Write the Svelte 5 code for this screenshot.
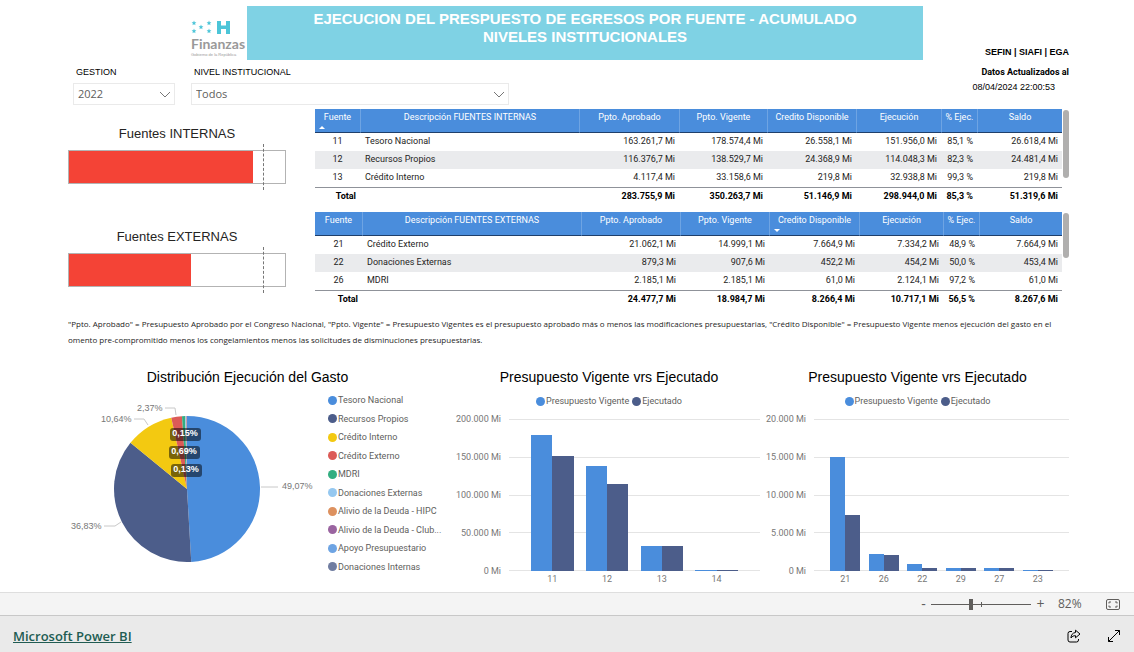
<script>
  let gestion = $state('2022');
  let nivel = $state('Todos');
  let zoom = $state(40);

  const gauges = [
    { label: 'Fuentes INTERNAS', value: 85.3 },
    { label: 'Fuentes EXTERNAS', value: 56.5 },
  ];

  const tables = [
    {
      columns: [
        { name: 'Fuente', width: 45, sort: 'asc' },
        { name: 'Descripción FUENTES INTERNAS', width: 219 },
        { name: 'Ppto. Aprobado', width: 100 },
        { name: 'Ppto. Vigente', width: 88 },
        { name: 'Credito Disponible', width: 89 },
        { name: 'Ejecución', width: 85 },
        { name: '% Ejec.', width: 36 },
        { name: 'Saldo', width: 85 },
      ],
      rows: [
        ['11', 'Tesoro Nacional', '163.261,7 Mi', '178.574,4 Mi', '26.558,1 Mi', '151.956,0 Mi', '85,1 %', '26.618,4 Mi'],
        ['12', 'Recursos Propios', '116.376,7 Mi', '138.529,7 Mi', '24.368,9 Mi', '114.048,3 Mi', '82,3 %', '24.481,4 Mi'],
        ['13', 'Crédito Interno', '4.117,4 Mi', '33.158,6 Mi', '219,8 Mi', '32.938,8 Mi', '99,3 %', '219,8 Mi'],
      ],
      total: ['Total', '', '283.755,9 Mi', '350.263,7 Mi', '51.146,9 Mi', '298.944,0 Mi', '85,3 %', '51.319,6 Mi'],
      scroll: 72,
    },
    {
      columns: [
        { name: 'Fuente', width: 47 },
        { name: 'Descripción FUENTES EXTERNAS', width: 219 },
        { name: 'Ppto. Aprobado', width: 99 },
        { name: 'Ppto. Vigente', width: 89 },
        { name: 'Credito Disponible', width: 90, sort: 'desc' },
        { name: 'Ejecución', width: 84 },
        { name: '% Ejec.', width: 36 },
        { name: 'Saldo', width: 83 },
      ],
      rows: [
        ['21', 'Crédito Externo', '21.062,1 Mi', '14.999,1 Mi', '7.664,9 Mi', '7.334,2 Mi', '48,9 %', '7.664,9 Mi'],
        ['22', 'Donaciones Externas', '879,3 Mi', '907,6 Mi', '452,2 Mi', '454,2 Mi', '50,0 %', '453,4 Mi'],
        ['26', 'MDRI', '2.185,1 Mi', '2.185,1 Mi', '61,0 Mi', '2.124,1 Mi', '97,2 %', '61,0 Mi'],
      ],
      total: ['Total', '', '24.477,7 Mi', '18.984,7 Mi', '8.266,4 Mi', '10.717,1 Mi', '56,5 %', '8.267,6 Mi'],
      scroll: 47,
    },
  ];

  const sources = [
    { name: 'Tesoro Nacional', share: 49.07, color: '#4a8ddc' },
    { name: 'Recursos Propios', share: 36.83, color: '#4c5d8a' },
    { name: 'Crédito Interno', share: 10.64, color: '#f3c911' },
    { name: 'Crédito Externo', share: 2.37, color: '#dc5b57' },
    { name: 'MDRI', share: 0.69, color: '#33ae81' },
    { name: 'Donaciones Externas', share: 0.15, color: '#95c8f0' },
    { name: 'Alivio de la Deuda - HIPC', share: 0.13, color: '#dd915f' },
    { name: 'Alivio de la Deuda - Club...', share: 0.08, color: '#9a64a0' },
    { name: 'Apoyo Presupuestario', share: 0.03, color: '#6ea4e3' },
    { name: 'Donaciones Internas', share: 0.01, color: '#707da1' },
  ];

  const point = (share, r) => {
    const a = (share / 100) * Math.PI * 2;
    return `${119 + r * Math.sin(a)} ${94 - r * Math.cos(a)}`;
  };

  let start = 0;
  const slices = sources.map((s) => {
    const end = start + s.share;
    const d = `M119 94 L${point(start, 73)} A73 73 0 0 1 ${point(end, 73)} Z`;
    start = end;
    return { d, color: s.color };
  });

  const pieLabels = [
    { text: '49,07%', x: 214, y: 94, line: '193,92 210,92' },
    { text: '36,83%', x: 3, y: 134, line: '36,131 47,131 53,127' },
    { text: '10,64%', x: 33, y: 27, line: '66,24 76,24 80,30' },
    { text: '2,37%', x: 69, y: 16, line: '97,13 107,13 108,20' },
  ];

  const pieBadges = [
    { text: '0,15%', x: 102, y: 33 },
    { text: '0,69%', x: 101, y: 51 },
    { text: '0,13%', x: 103, y: 69 },
  ];

  const barCharts = [
    {
      id: 'internas',
      max: 200000,
      ticks: ['200.000 Mi', '150.000 Mi', '100.000 Mi', '50.000 Mi', '0 Mi'],
      bars: [
        ['11', 178574, 151956],
        ['12', 138529, 114048],
        ['13', 33158, 32938],
        ['14', 1500, 1400],
      ],
    },
    {
      id: 'externas',
      max: 20000,
      ticks: ['20.000 Mi', '15.000 Mi', '10.000 Mi', '5.000 Mi', '0 Mi'],
      bars: [
        ['21', 14999, 7334],
        ['26', 2185, 2124],
        ['22', 907, 454],
        ['29', 440, 430],
        ['27', 400, 350],
        ['23', 140, 130],
      ],
    },
  ];
</script>

{#snippet chevron()}
  <svg class="chevron" viewBox="0 0 12 7" aria-hidden="true"><path d="M1 1l5 5 5-5" /></svg>
{/snippet}

<div class="page">
  <main class="report">
    <header class="header">
      <div class="logo">
        <svg class="logo-mark" viewBox="0 0 40 15" aria-hidden="true">
          {#each [[3, 3], [3, 11], [10, 7], [18, 3], [18, 11]] as [x, y]}
            <path transform="translate({x} {y})" d="M0-2.4l.7 1.6 1.7.1-1.3 1.1.4 1.8L0 1.2l-1.5 1 .4-1.8L-2.4-.7l1.7-.1z" />
          {/each}
          <path d="M26 1h4v4.500h5V1h4v13h-4V9h-5v5h-4z" />
        </svg>
        <span class="logo-name">Finanzas</span>
        <span class="logo-sub">Gobierno de la República</span>
      </div>
      <h1 class="banner">
        EJECUCION DEL PRESPUESTO DE EGRESOS POR FUENTE - ACUMULADO<br />NIVELES INSTITUCIONALES
      </h1>
      <div class="meta">
        <strong class="meta-source">SEFIN | SIAFI | EGA</strong>
        <strong class="meta-title">Datos Actualizados al</strong>
        <span class="meta-date">08/04/2024 22:00:53</span>
      </div>
      <div class="filters">
        <div class="filter">
          <label for="gestion">GESTION</label>
          <div class="select">
            <select id="gestion" bind:value={gestion}>
              <option>2022</option>
            </select>
            {@render chevron()}
          </div>
        </div>
        <div class="filter filter-wide">
          <label for="nivel">NIVEL INSTITUCIONAL</label>
          <div class="select">
            <select id="nivel" bind:value={nivel}>
              <option>Todos</option>
            </select>
            {@render chevron()}
          </div>
        </div>
      </div>
    </header>

    <section class="summary">
      <div class="gauges">
        {#each gauges as gauge}
          <div class="gauge">
            <h2 class="gauge-title">{gauge.label}</h2>
            <div class="gauge-track">
              <div class="gauge-fill" style:width="{gauge.value}%"></div>
              <div class="gauge-target"></div>
            </div>
          </div>
        {/each}
      </div>

      <div class="tables">
        {#each tables as table}
          <div class="table-wrap">
            <table>
              <colgroup>
                {#each table.columns as column}
                  <col style:width="{column.width}px" />
                {/each}
              </colgroup>
              <thead>
                <tr>
                  {#each table.columns as column}
                    <th scope="col">
                      {column.name}
                      {#if column.sort}<i class="sort {column.sort}"></i>{/if}
                    </th>
                  {/each}
                </tr>
              </thead>
              <tbody>
                {#each table.rows as row}
                  <tr>
                    {#each row as cell}<td>{cell}</td>{/each}
                  </tr>
                {/each}
              </tbody>
              <tfoot>
                <tr>
                  {#each table.total as cell}<td>{cell}</td>{/each}
                </tr>
              </tfoot>
            </table>
            <div class="scroll">
              <div class="scroll-thumb" style:height="{table.scroll}%"></div>
            </div>
          </div>
        {/each}
      </div>
    </section>

    <p class="notes">
      "Ppto. Aprobado" = Presupuesto Aprobado por el Congreso Nacional, "Ppto. Vigente" = Presupuesto Vigentes es el presupuesto aprobado más o menos las modificaciones presupuestarias, "Crédito Disponible" = Presupuesto Vigente menos ejecución del gasto en el<br />
      omento pre-compromitido menos los congelamientos menos las solicitudes de disminuciones presupuestarias.
    </p>

    <section class="charts">
      <div class="chart pie-chart">
        <h2 class="chart-title">Distribución Ejecución del Gasto</h2>
        <div class="pie-body">
          <svg class="pie" viewBox="0 -1 255 176">
            {#each slices as slice}
              <path d={slice.d} fill={slice.color} />
            {/each}
            {#each pieLabels as label}
              <polyline points={label.line} />
              <text class="pie-label" x={label.x} y={label.y}>{label.text}</text>
            {/each}
            {#each pieBadges as badge}
              <rect class="pie-badge" x={badge.x} y={badge.y} width="31" height="13" rx="3" />
              <text class="pie-badge-text" x={badge.x + 15} y={badge.y + 8}>{badge.text}</text>
            {/each}
          </svg>
          <ul class="pie-legend">
            {#each sources as source}
              <li><i class="dot" style:background={source.color}></i>{source.name}</li>
            {/each}
          </ul>
        </div>
      </div>

      {#each barCharts as chart (chart.id)}
        <div class="chart {chart.id}">
          <div class="bar-heading">
            <h2 class="chart-title">Presupuesto Vigente vrs Ejecutado</h2>
            <div class="legend">
              <span><i class="dot vigente"></i>Presupuesto Vigente</span>
              <span><i class="dot ejecutado"></i>Ejecutado</span>
            </div>
          </div>
          <div class="plot">
            <div class="y-axis">
              {#each chart.ticks as tick}<span>{tick}</span>{/each}
            </div>
            <div class="plot-area">
              <div class="grid-lines">
                {#each chart.ticks as tick (tick)}<i></i>{/each}
              </div>
              <div class="bars">
                {#each chart.bars as [name, vigente, ejecutado] (name)}
                  <div class="group">
                    <div class="bar vigente" style:height="{(vigente / chart.max) * 100}%"></div>
                    <div class="bar ejecutado" style:height="{(ejecutado / chart.max) * 100}%"></div>
                  </div>
                {/each}
              </div>
              <div class="x-axis">
                {#each chart.bars as [name] (name)}<span>{name}</span>{/each}
              </div>
            </div>
          </div>
        </div>
      {/each}
    </section>
  </main>

  <div class="status">
    <button class="zoom-step" aria-label="Alejar" onclick={() => (zoom -= 5)}>-</button>
    <input class="zoom" type="range" min="0" max="100" aria-label="Zoom" bind:value={zoom} />
    <button class="zoom-step" aria-label="Acercar" onclick={() => (zoom += 5)}>+</button>
    <span class="zoom-value">82%</span>
    <button class="fit" aria-label="Ajustar a la página">
      <svg viewBox="0 0 14 11"><rect x=".5" y=".5" width="13" height="10" rx="1.500" /><path d="M5 3H3v1.500M3 6.500V8h2M9 3h2v1.500M11 6.500V8H9" /></svg>
    </button>
  </div>

  <footer class="footer">
    <a href="https://powerbi.microsoft.com">Microsoft Power BI</a>
    <div class="actions">
      <button aria-label="Compartir">
        <svg viewBox="0 0 14 14"><path d="M5 2.500H3a2 2 0 0 0-2 2V11a2 2 0 0 0 2 2h6.500a2 2 0 0 0 2-2v-1" /><path d="M8.500 1.200L13 5 8.500 8.800V6.700C6.500 6.600 5 7.400 4 9c0-3 1.600-5.200 4.500-5.500z" /></svg>
      </button>
      <button aria-label="Pantalla completa">
        <svg viewBox="0 0 14 14"><path d="M1.500 12.500l11-11M8 1.500h4.500V6M1.500 8v4.500H6" /></svg>
      </button>
    </div>
  </footer>
</div>

<style>
  :global(body) {
    margin: 0;
    background: #fff;
  }

  .page {
    --blue: #4a8ddc;
    --navy: #4c5d8a;
    --sans: 'Open Sans', 'Noto Sans', sans-serif;
    --arial: 'Liberation Sans', Arial, sans-serif;
    display: flex;
    flex-direction: column;
    min-height: 100vh;
    font-family: Roboto, sans-serif;
    font-size: 9px;
    line-height: 12px;
    color: #252423;
  }

  .report {
    flex: 1;
    padding: 6px 65px 0 68px;
  }

  h1,
  h2,
  p,
  ul {
    margin: 0;
    padding: 0;
    font-weight: normal;
  }

  button {
    display: flex;
    padding: 0;
    border: 0;
    background: none;
    color: inherit;
    font: inherit;
    cursor: pointer;
  }

  button svg {
    fill: none;
    stroke: currentColor;
  }

  .header {
    display: grid;
    grid-template-columns: 176px 1fr 143px;
    grid-template-rows: 54px 49px;
    column-gap: 3px;
    font-family: var(--arial);
    color: #000;
  }

  .logo {
    display: flex;
    flex-direction: column;
    justify-self: end;
    width: 53px;
    padding-top: 14px;
  }

  .logo-mark {
    width: 40px;
    height: 15px;
    fill: #4cc5d8;
  }

  .logo-name {
    font: bold 14px/18px Lato, sans-serif;
    color: #999;
  }

  .logo-sub {
    font-size: 4px;
    line-height: 4px;
    white-space: nowrap;
    color: #999;
  }

  .banner {
    padding-top: 4px;
    background: #7fd2e4;
    color: #fff;
    font-size: 15px;
    font-weight: bold;
    line-height: 18px;
    text-align: center;
  }

  .meta {
    grid-row: 1 / 3;
    grid-column: 3;
    display: flex;
    flex-direction: column;
    align-items: flex-end;
    padding-top: 40px;
  }

  .meta-source {
    margin-bottom: 8px;
  }

  .meta-title {
    font-family: Roboto, sans-serif;
  }

  .meta-date {
    margin-top: 3px;
    padding-right: 14px;
  }

  .filters {
    grid-column: 1 / 3;
    display: flex;
    gap: 16px;
    padding: 6px 0 0 5px;
  }

  .filter {
    width: 102px;
  }

  .filter-wide {
    width: 318px;
  }

  .filter label {
    display: block;
    padding-left: 3px;
    margin-bottom: 5px;
  }

  .select {
    position: relative;
  }

  select {
    appearance: none;
    display: block;
    width: 100%;
    height: 22px;
    padding: 0 4px;
    border: 1px solid #eaeaea;
    border-radius: 0;
    background: #fff;
    color: #605e5c;
    font: 11px/20px var(--sans);
  }

  .chevron {
    position: absolute;
    right: 4px;
    top: 8px;
    width: 12px;
    height: 7px;
    fill: none;
    stroke: #777;
    pointer-events: none;
  }

  .summary {
    display: grid;
    grid-template-columns: 218px 1fr;
    gap: 29px;
  }

  .gauge {
    height: 103px;
    box-sizing: border-box;
    padding-top: 16px;
  }

  .gauge-title {
    margin-bottom: 7px;
    font: 13px/18px var(--arial);
    text-align: center;
  }

  .gauge-track {
    position: relative;
    height: 34px;
    box-sizing: border-box;
    border: 1px solid #b3b3b3;
  }

  .gauge-fill {
    height: 100%;
    background: #f44336;
  }

  .gauge-target {
    position: absolute;
    top: -7px;
    bottom: -7px;
    left: 90%;
    border-left: 1px dashed #777;
  }

  .tables {
    display: flex;
    flex-direction: column;
    gap: 7px;
  }

  .table-wrap {
    display: flex;
    gap: 1px;
  }

  table {
    flex: 1;
    width: 100%;
    table-layout: fixed;
    border-collapse: separate;
    border-spacing: 0;
  }

  th,
  td {
    box-sizing: border-box;
    height: 18px;
    padding: 0 4px;
    line-height: 17px;
    text-align: right;
    white-space: nowrap;
    vertical-align: top;
  }

  th {
    position: relative;
    height: 24px;
    padding: 0;
    border-bottom: 1px solid #1f3f6b;
    background: var(--blue);
    color: #fff;
    font-weight: normal;
    text-align: center;
  }

  th + th {
    border-left: 1px solid #6ea4e3;
  }

  .sort {
    position: absolute;
    left: 4px;
    bottom: 3px;
    border: 3px solid transparent;
  }

  .asc {
    border-top: 0;
    border-bottom-color: #fff;
  }

  .desc {
    border-bottom: 0;
    border-top-color: #fff;
  }

  tbody td:first-child {
    text-align: center;
  }

  td:nth-child(2) {
    padding-left: 5px;
    text-align: left;
  }

  tbody tr:nth-child(even) td {
    background: #eaebed;
  }

  tfoot td {
    border-top: 1px solid #8f9299;
    color: #000;
    font-weight: bold;
  }

  .scroll {
    width: 6px;
    padding-top: 1px;
  }

  .scroll-thumb {
    border-radius: 3px;
    background: #b0afae;
  }

  .notes {
    margin-top: 1px;
    font-family: var(--sans);
    font-size: 8px;
    line-height: 16px;
    white-space: nowrap;
  }

  .charts {
    display: grid;
    grid-template-columns: 384fr 308fr 309fr;
    margin-top: 20px;
  }

  .chart-title {
    color: #000;
    font: 14px/18px var(--arial);
    text-align: center;
  }

  .pie-chart .chart-title {
    padding-right: 25px;
  }

  .bar-heading {
    padding-left: 6px;
  }

  .pie-body {
    display: flex;
    gap: 5px;
    margin-top: 8px;
  }

  .pie {
    width: 255px;
    height: 176px;
    font-family: var(--arial);
  }

  .pie polyline {
    fill: none;
    stroke: #c8c8c8;
  }

  .pie-label {
    fill: #777;
  }

  .pie-badge {
    fill: #000;
    fill-opacity: 0.5;
  }

  .pie-badge-text {
    fill: #fff;
    font-weight: bold;
    text-anchor: middle;
  }

  .pie-legend {
    display: flex;
    flex-direction: column;
    justify-content: space-between;
    height: 179px;
    list-style: none;
    color: #605e5c;
    white-space: nowrap;
  }

  .pie-legend li,
  .legend span {
    display: flex;
    align-items: center;
    gap: 1px;
  }

  .dot {
    width: 9px;
    height: 9px;
    border-radius: 50%;
  }

  .vigente {
    background: var(--blue);
  }

  .ejecutado {
    background: var(--navy);
  }

  .legend {
    display: flex;
    justify-content: center;
    gap: 3px;
    margin: 9px 0 6px;
    color: #605e5c;
  }

  .plot {
    display: grid;
    grid-template-columns: 49px 1fr;
    gap: 8px;
    color: #777;
  }

  .externas .plot {
    grid-template-columns: 46px 1fr;
  }

  .y-axis {
    display: flex;
    flex-direction: column;
    justify-content: space-between;
    height: 164px;
    text-align: right;
    white-space: nowrap;
  }

  .plot-area {
    display: grid;
    grid-template-rows: 152px 12px;
    row-gap: 2px;
    padding-top: 6px;
  }

  .grid-lines,
  .bars {
    grid-area: 1 / 1;
  }

  .grid-lines {
    display: flex;
    flex-direction: column;
    justify-content: space-between;
  }

  .grid-lines i {
    height: 1px;
    background: #e4e4e4;
  }

  .bars,
  .x-axis {
    display: flex;
    padding: 0 16px;
  }

  .externas .bars,
  .externas .x-axis {
    padding: 0 12px;
  }

  .group {
    flex: 1;
    display: flex;
    align-items: flex-end;
    justify-content: center;
  }

  .bar {
    width: 39%;
  }

  .x-axis span {
    flex: 1;
    text-align: center;
  }

  .status {
    display: flex;
    align-items: center;
    justify-content: flex-end;
    height: 24px;
    box-sizing: border-box;
    padding-right: 14px;
    border-top: 1px solid #dedede;
    border-bottom: 1px solid #c8c8c8;
    background: #f4f4f4;
    color: #605e5c;
    font: 12px/16px var(--sans);
  }

  .zoom-step {
    width: 9px;
    justify-content: center;
    font-size: 14px;
  }

  .zoom {
    appearance: none;
    width: 100px;
    height: 11px;
    margin: 0 5px 0 3px;
    background:
      linear-gradient(#605e5c, #605e5c) center / 100% 1px no-repeat,
      linear-gradient(#605e5c, #605e5c) center / 1px 5px no-repeat;
  }

  .zoom::-webkit-slider-thumb {
    appearance: none;
    width: 4px;
    height: 11px;
    background: #605e5c;
  }

  .zoom-value {
    width: 24px;
    margin: 0 24px 0 13px;
  }

  .fit svg {
    width: 14px;
    height: 11px;
  }

  .footer {
    display: flex;
    align-items: center;
    justify-content: space-between;
    height: 36px;
    padding: 4px 13px 0;
    box-sizing: border-box;
    background: #eaeaea;
    color: #000;
  }

  .footer a {
    color: #215c52;
    font: 600 13px/18px var(--sans);
  }

  .actions {
    display: flex;
    gap: 26px;
  }

  .actions svg {
    width: 14px;
    height: 14px;
  }
</style>
